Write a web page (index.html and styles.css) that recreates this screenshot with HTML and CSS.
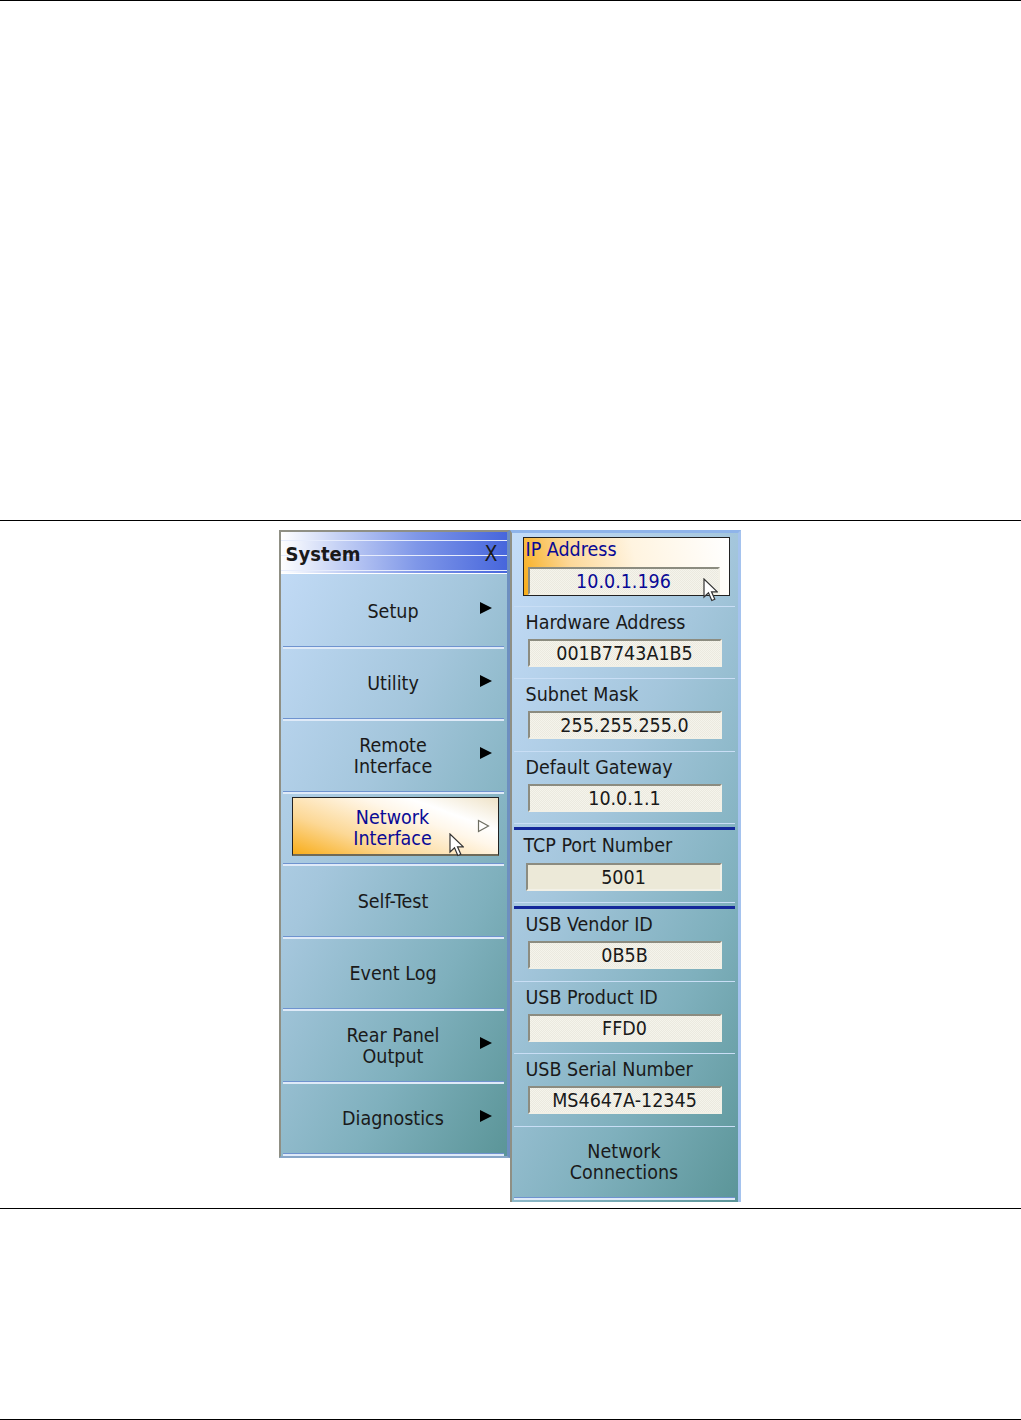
FILE: index.html
```html
<!DOCTYPE html>
<html lang="en">
    <head>
        <meta charset="UTF-8" />
        <title>System - Network Interface</title>
        <link rel="stylesheet" href="styles.css">
    </head>
    <body>
        <div class="page-top"></div>

        <div class="figure">
            <div class="menu menu-system">
                <div class="menu-title">
                    <span>System</span>
                    <span class="menu-close">X</span>
                </div>
                <div class="btn"><span class="btn-text">Setup</span><span class="arrow"></span></div>
                <div class="btn"><span class="btn-text">Utility</span><span class="arrow"></span></div>
                <div class="btn"><span class="btn-text">Remote<br>Interface</span><span class="arrow"></span></div>
                <div class="btn btn-active">
                    <div class="btn-hot">
                        <span class="btn-text">Network<br>Interface</span>
                        <svg class="arrow-open" width="13" height="14" viewBox="0 0 13 14"><path d="M1.500 1.500l10 5.500-10 5.500z" fill="#fff" stroke="#6e6e62" stroke-width="1.200"/></svg>
                        <svg class="cursor cursor-menu" width="15" height="24" viewBox="0 0 15 24"><path d="M1 1v18l4.500-4.200 3.300 7.700 3-1.300-3.300-7.400h5.800z" fill="#fff" stroke="#333" stroke-width="1.200"/></svg>
                    </div>
                </div>
                <div class="btn"><span class="btn-text">Self-Test</span></div>
                <div class="btn"><span class="btn-text">Event Log</span></div>
                <div class="btn"><span class="btn-text">Rear Panel<br>Output</span><span class="arrow"></span></div>
                <div class="btn"><span class="btn-text">Diagnostics</span><span class="arrow"></span></div>
            </div>

            <div class="menu menu-network">
                <div class="row row-active">
                    <div class="row-hot">
                        <div class="row-label">IP Address</div>
                        <div class="field">10.0.1.196</div>
                        <svg class="cursor cursor-field" width="15" height="24" viewBox="0 0 15 24"><path d="M1 1v18l4.500-4.200 3.300 7.700 3-1.300-3.300-7.400h5.800z" fill="#fff" stroke="#333" stroke-width="1.200"/></svg>
                    </div>
                </div>
                <div class="row">
                    <div class="row-label">Hardware Address</div>
                    <div class="field">001B7743A1B5</div>
                </div>
                <div class="row">
                    <div class="row-label">Subnet Mask</div>
                    <div class="field">255.255.255.0</div>
                </div>
                <div class="row">
                    <div class="row-label">Default Gateway</div>
                    <div class="field">10.0.1.1</div>
                </div>
                <div class="blue-rule"></div>
                <div class="row row-tcp">
                    <div class="row-label">TCP Port Number</div>
                    <div class="field field-flat">5001</div>
                </div>
                <div class="blue-rule"></div>
                <div class="row">
                    <div class="row-label">USB Vendor ID</div>
                    <div class="field">0B5B</div>
                </div>
                <div class="row">
                    <div class="row-label">USB Product ID</div>
                    <div class="field">FFD0</div>
                </div>
                <div class="row">
                    <div class="row-label">USB Serial Number</div>
                    <div class="field">MS4647A-12345</div>
                </div>
                <div class="btn btn-wide"><span class="btn-text">Network<br>Connections</span></div>
            </div>
        </div>

        <div class="page-bottom"></div>
    </body>
</html>
```

FILE: styles.css
```css
body {
    margin: 0;
    background-color: #fff;
    color: #1a1a1a;
    font-family: "DejaVu Sans", sans-serif;
    font-stretch: condensed;
    font-size: 19.500px;
}

.page-top {
    height: 519px;
    border-top: 1px solid #000;
}

.figure {
    height: 689px;
    padding: 9px 2px 0 0;
    box-sizing: border-box;
    display: flex;
    justify-content: center;
    align-items: flex-start;
    border-top: 1px solid #000;
    border-bottom: 1px solid #000;
}

.page-bottom {
    height: 210px;
    border-bottom: 1px solid #000;
}

.menu {
    box-sizing: border-box;
    background: linear-gradient(117deg, #c4dcf8 0%, #a4c6dc 40%, #7fb0bd 72%, #5b9598 100%);
}

.menu-system {
    width: 231px;
    height: 628px;
    border: 2px solid #8f8f84;
    border-right: 3px solid #6d8fc0;
    border-bottom: 2px solid #87a6c8;
}

.menu-network {
    width: 231px;
    height: 672px;
    padding-top: 1px;
    border-top: 3px solid #8fb4ea;
    border-left: 2px solid #8f8f84;
    border-right: 3px solid #a5c3ee;
}

.menu-title {
    height: 42px;
    margin-bottom: 2px;
    padding: 2px 9px 0 5px;
    display: flex;
    align-items: center;
    justify-content: space-between;
    box-sizing: border-box;
    font-size: 20px;
    font-weight: bold;
    border-bottom: 1px solid #fff;
    background:
        repeating-linear-gradient(to bottom, transparent 0, transparent 8px, #e6ecfc 8px, #e6ecfc 9px, transparent 9px, transparent 15px),
        linear-gradient(to right, #fff 0%, #c6d2f5 25%, #7f97e8 60%, #4766dc 100%);
}

.menu-close {
    font-weight: normal;
    font-size: 21px;
}

.btn {
    height: 72.500px;
    margin: 0 3px 0 2px;
    box-sizing: border-box;
    display: grid;
    grid-template-columns: 1fr auto 1fr;
    align-items: center;
    border-bottom: 2px solid #dfeaf8;
    box-shadow: inset 0 -1px 0 #6f93cf;
    line-height: 21px;
    text-align: center;
}

.btn-text {
    grid-column: 2;
}

.arrow {
    grid-column: 3;
    justify-self: end;
    width: 0;
    height: 0;
    margin: -6px 12px 0 0;
    border-left: 12px solid #000;
    border-top: 6px solid transparent;
    border-bottom: 6px solid transparent;
}

.arrow-open {
    grid-column: 3;
    justify-self: end;
    margin: -3px 3px 0 0;
}

.btn-active {
    display: block;
    padding: 3px 5px 6px 9px;
}

.btn-hot {
    position: relative;
    height: 59px;
    padding: 4px 5px 0 0;
    box-sizing: border-box;
    display: grid;
    grid-template-columns: 1fr auto 1fr;
    align-items: center;
    color: #0a0a96;
    border: 1px solid #222;
    border-bottom: 2px solid #6e6a58;
    background: linear-gradient(20deg, #f8ad1a 0%, #fcd896 30%, #fff7ea 62%, #fff 75%, #efe3c8 100%);
}

.btn-wide {
    height: 73px;
}

.row {
    height: 72.500px;
    margin: 0 3px 0 2px;
    box-sizing: border-box;
    padding: 4px 13px 0 12px;
    border-bottom: 1px solid #c9def5;
    line-height: 24px;
}

.row-tcp {
    height: 73px;
    padding-left: 10px;
}

.row-active {
    padding: 3px 5px 0 9px;
}

.row-hot {
    position: relative;
    height: 59px;
    box-sizing: border-box;
    padding: 1px 9px 0 2px;
    border: 1px solid #222;
    background: linear-gradient(75deg, #f8ad1a 0%, #fcd89a 25%, #fff4e0 55%, #fff 100%);
    color: #0a0a96;
}

.row-label {
    height: 24px;
    white-space: nowrap;
}

.row-hot .row-label {
    height: 22px;
    line-height: 22px;
}

.field {
    height: 28px;
    margin: 4px 0 0 2px;
    box-sizing: border-box;
    border: 2px solid;
    border-color: #8c8c80 #f2f0e6 #f2f0e6 #8c8c80;
    background-color: #f1efe6;
    background-image: repeating-conic-gradient(#ebe9df 0 25%, #f5f4ec 0 50%);
    background-size: 2px 2px;
    line-height: 26px;
    text-align: center;
}

.row-tcp .field {
    margin-top: 5px;
}

.row-hot .field {
    margin-top: 6px;
}

.field-flat {
    background: #ece9d8;
}

.blue-rule {
    height: 3px;
    margin: 3px 3px 0 2px;
    background-color: #14289a;
}

.cursor {
    position: absolute;
}

.cursor-menu {
    left: 156px;
    top: 35px;
}

.cursor-field {
    left: 179px;
    top: 40px;
}
```
